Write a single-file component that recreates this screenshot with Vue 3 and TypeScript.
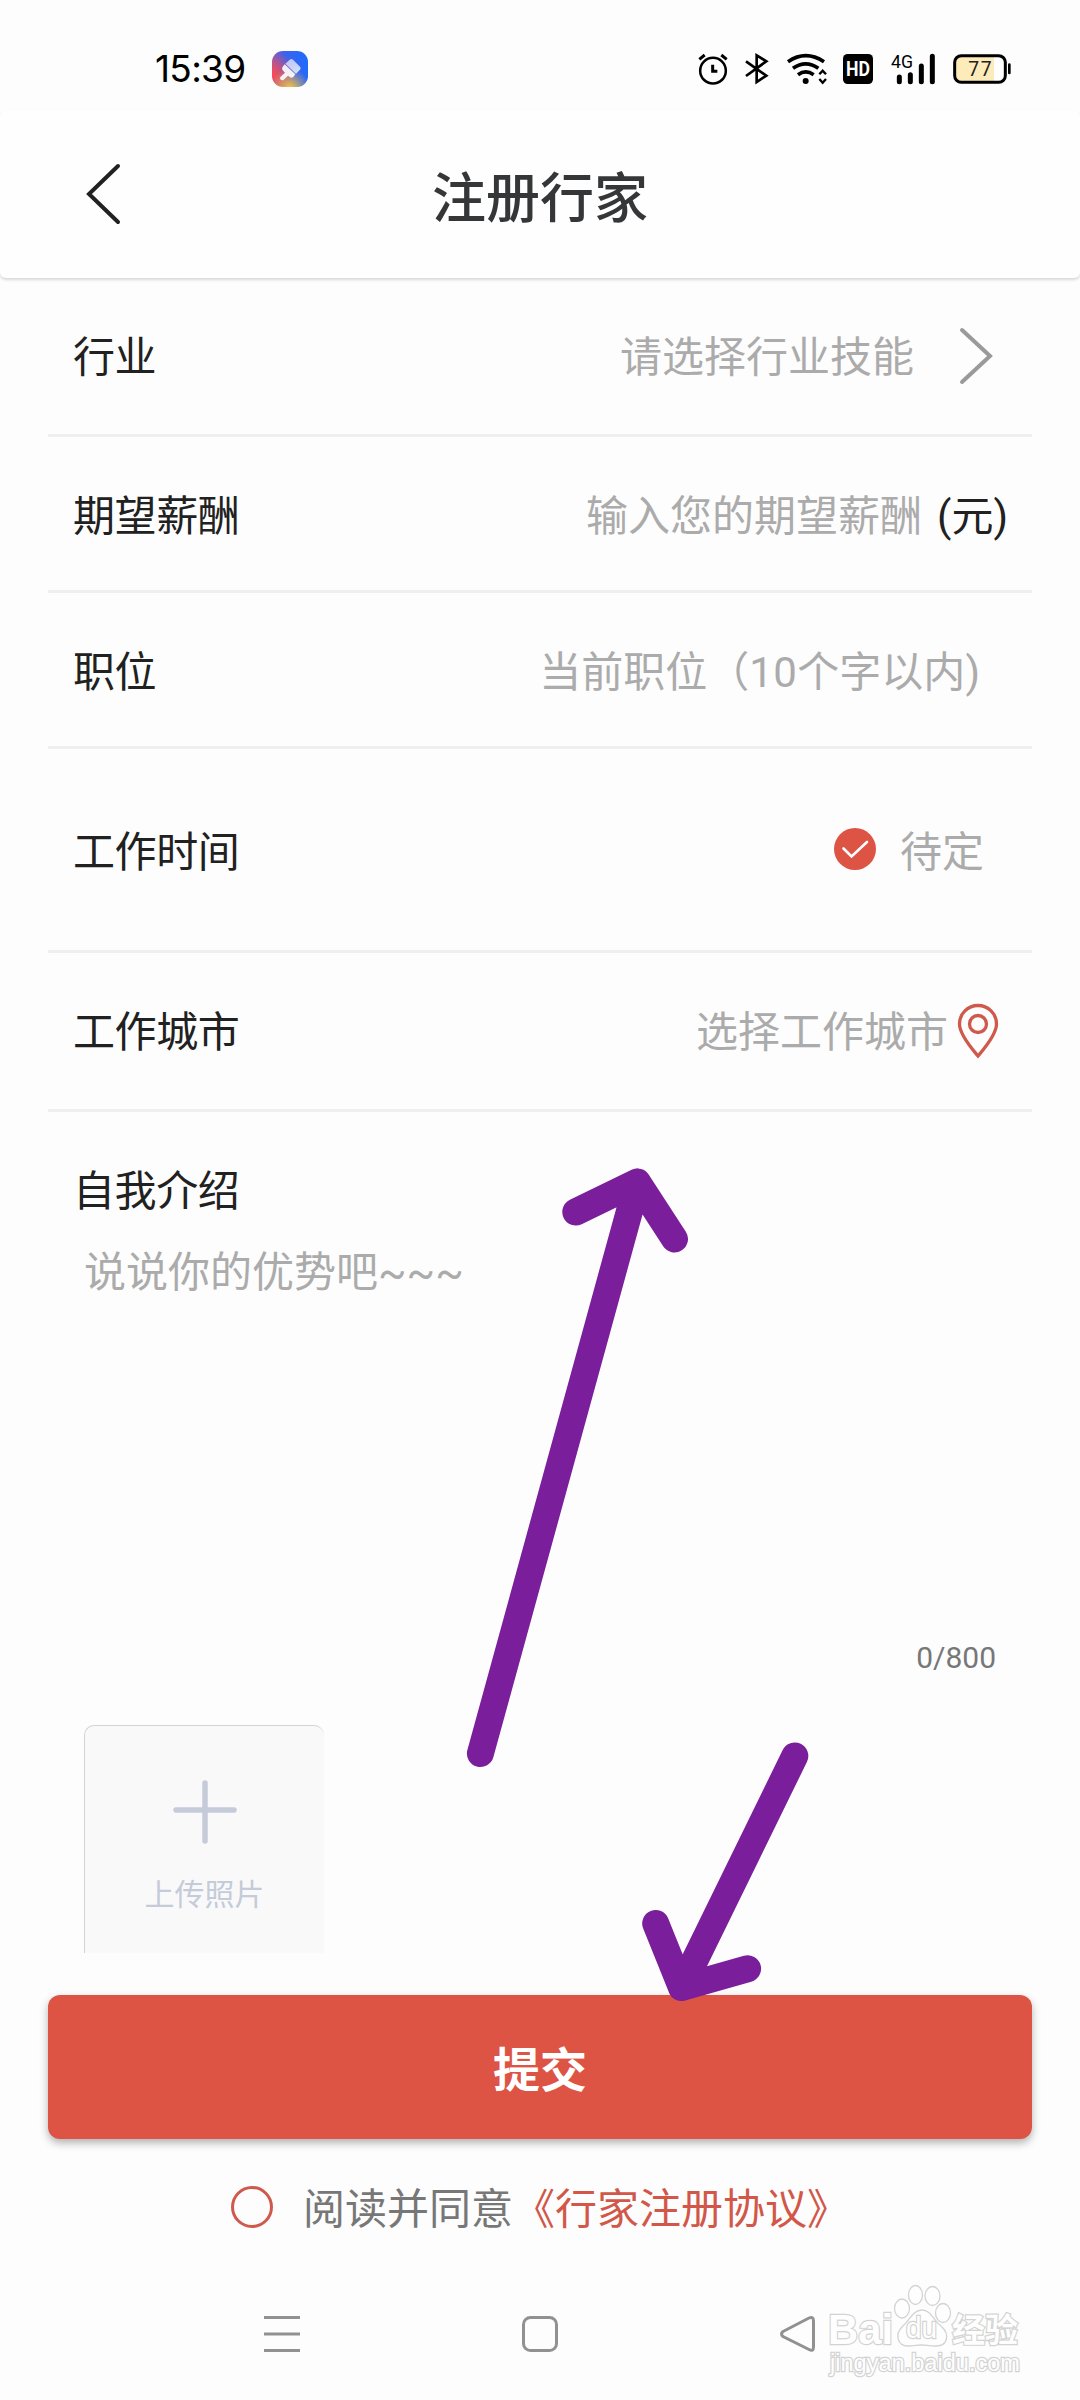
<script setup lang="ts">
interface Field {
  key: string
  label: string
  hint: string
}

const fields: Field[] = [
  { key: 'industry', label: '行业', hint: '请选择行业技能' },
  { key: 'salary', label: '期望薪酬', hint: '输入您的期望薪酬' },
  { key: 'position', label: '职位', hint: '' },
  { key: 'time', label: '工作时间', hint: '待定' },
  { key: 'city', label: '工作城市', hint: '选择工作城市' },
]
</script>

<template>
  <div class="screen">
    <div class="status">
      <span class="clock">15:39</span>
      <div class="app-badge">
        <svg viewBox="456 63 108 108" width="36" height="36">
          <defs>
            <linearGradient id="brush" x1="0" y1="0" x2="0.7" y2="1">
              <stop offset="0" stop-color="#fff" stop-opacity=".62" />
              <stop offset="1" stop-color="#fff" stop-opacity=".78" />
            </linearGradient>
          </defs>
          <path d="M509 89 Q514 85 519 89 L540 110 Q544 115 540 119 L528 131 L496 101 Z" fill="url(#brush)" />
          <path d="M494 103 L526 133 L520 141 Q514 145 509 141 L504 137 L491 149 Q486 153 481 148 Q478 144 482 140 L495 128 L488 121 Q484 116 488 110 Z" fill="#fff" fill-opacity=".9" />
        </svg>
      </div>
      <div class="indicators">
        <svg viewBox="54 66 90 102" width="30" height="34" fill="none" stroke="#000">
          <circle cx="99" cy="122" r="38.500" stroke-width="7.500" />
          <path d="M58 88 L74 75 M124 75 L140 88" stroke-width="9" />
          <path d="M98 104 V124 H112" stroke-width="9" />
        </svg>
        <svg class="bt" viewBox="192 66 78 102" width="26" height="34" fill="none" stroke="#000" stroke-width="8">
          <path d="M198 94 L259 137 L230 156 V76 L259 94 L198 138" />
        </svg>
        <svg class="wifi" viewBox="318 66 126 102" width="42" height="34" fill="none" stroke="#000">
          <path d="M324 95 Q377 59 432 95" stroke-width="11" />
          <path d="M339 115 Q377 88 415 115" stroke-width="11" />
          <path d="M354 134 Q377 117 401 134" stroke-width="11" />
          <circle cx="377" cy="153" r="9" fill="#000" stroke="none" />
          <path d="M418 133 L428 122 L438 133 M418 147 L428 158 L438 147" stroke-width="7" />
        </svg>
        <svg class="hd" viewBox="489 66 90 102" width="30" height="34">
          <rect x="489" y="72" width="90" height="90" rx="14" />
          <text x="534" y="139" class="hd-text" textLength="72" lengthAdjust="spacingAndGlyphs">HD</text>
        </svg>
        <svg class="signal" viewBox="630 66 141 102" width="47" height="34">
          <text x="633" y="115" class="g-text" textLength="66" lengthAdjust="spacingAndGlyphs">4G</text>
          <path d="M658 141 V155 M691 134 V155 M724 108 V155 M757 79 V155" stroke="#000" stroke-width="15" stroke-linecap="round" />
        </svg>
        <svg class="battery" viewBox="816 66 180 102" width="60" height="34">
          <rect x="824" y="77" width="152" height="80" rx="20" fill="#fff" />
          <path d="M844 77 H942 V157 H844 Q824 157 824 137 V97 Q824 77 844 77" fill="#fdebb9" />
          <rect x="824" y="77" width="152" height="80" rx="20" fill="none" stroke="#000" stroke-width="9" />
          <path d="M988 104 V129" stroke="#000" stroke-width="8" stroke-linecap="round" />
          <text x="900" y="138" class="bat-text" textLength="70">77</text>
        </svg>
      </div>
    </div>

    <header class="header">
      <svg class="back" viewBox="0 0 40 64" width="40" height="64">
        <path d="M34 4 L5 32 L34 60" />
      </svg>
      <h1>注册行家</h1>
    </header>

    <main>
      <div v-for="f in fields" :key="f.key" class="row" :class="f.key">
        <span class="label">{{ f.label }}</span>
        <svg v-if="f.key === 'time'" class="tick" viewBox="0 0 42 42" width="42" height="42">
          <circle cx="21" cy="21" r="21" fill="#dd5344" />
          <path d="M9.500 20.500 L17.500 28.500 L33 14" fill="none" stroke="#fff" stroke-width="2.600" stroke-linecap="round" />
        </svg>
        <span v-if="f.key === 'position'" class="hint">当前职位（<span class="num">10</span>个字以内<span class="paren">)</span></span>
        <span v-else class="hint">{{ f.hint }}</span>
        <svg v-if="f.key === 'industry'" class="next" viewBox="0 0 34 58" width="34" height="58">
          <path d="M3 3 L31 29 L3 55" />
        </svg>
        <span v-if="f.key === 'salary'" class="unit">(元)</span>
        <svg v-if="f.key === 'city'" class="pin" viewBox="0 0 42 56" width="42" height="56">
          <path d="M21 53 C16 47 2.500 32 2.500 21 A18.500 18.500 0 0 1 39.500 21 C39.500 32 26 47 21 53 Z" />
          <circle cx="21" cy="21" r="8.500" />
        </svg>
      </div>

      <section class="intro">
        <div class="label">自我介绍</div>
        <div class="hint">说说你的优势吧~~~</div>
        <div class="count">0/800</div>
      </section>

      <div class="upload">
        <svg viewBox="0 0 66 66" width="66" height="66">
          <path d="M33 4 V62 M4 31 H62" />
        </svg>
        <span>上传照片</span>
      </div>

      <button class="submit">提交</button>

      <div class="agree">
        <i class="radio"></i>
        <span>阅读并同意</span><span class="link">《行家注册协议》</span>
      </div>
    </main>

    <nav class="nav">
      <svg viewBox="0 0 36 40" width="36" height="40"><path d="M0 3.500 H36 M0 20 H36 M0 36.500 H36" /></svg>
      <svg viewBox="0 0 36 40" width="36" height="40"><rect x="1.500" y="3.500" width="33" height="33" rx="7" /></svg>
      <svg viewBox="0 0 36 40" width="36" height="40"><path d="M3 17.500 L29 4 Q33.500 2 33.500 7 V33 Q33.500 38 29 35.500 L3 22.500 Q0 20 3 17.500 Z" /></svg>
    </nav>

    <svg class="watermark" viewBox="822 2278 206 104" width="206" height="104">
      <g class="wm">
        <text x="828" y="2344" class="wm-bai" textLength="65" lengthAdjust="spacingAndGlyphs">Bai</text>
        <ellipse cx="902" cy="2308.500" rx="7.500" ry="9.500" />
        <ellipse cx="915.500" cy="2295" rx="7" ry="9.500" />
        <ellipse cx="932.500" cy="2296" rx="7.500" ry="9.500" />
        <ellipse cx="943" cy="2313" rx="7.500" ry="9.500" />
        <path d="M922 2310 C931 2310 933 2320 941 2326 C950 2334 948 2346 936 2346 C929 2346 926 2345 922 2345 C917 2345 914 2346 908 2346 C897 2346 895 2334 902 2327 C910 2320 913 2310 922 2310 Z" />
        <text x="906" y="2338" class="wm-du" textLength="31" lengthAdjust="spacingAndGlyphs">du</text>
        <text x="952" y="2342" class="wm-cn">经验</text>
        <text x="830" y="2371" class="wm-url" textLength="190" lengthAdjust="spacingAndGlyphs">jingyan.baidu.com</text>
      </g>
    </svg>

    <svg class="arrows" viewBox="0 0 1080 2400" width="1080" height="2400">
      <path d="M480.400 1753.500 L637.500 1182 M575.800 1212 L637.500 1182 L674.500 1239" />
      <path d="M794.800 1756 L681.500 1987.500 M655.700 1923.500 L681.500 1987.500 L747.600 1968.700" />
    </svg>
  </div>
</template>

<style>
body {
  margin: 0;
  background: #fdfdfd;
}
</style>

<style scoped>
.screen {
  position: relative;
  box-sizing: border-box;
  width: 1080px;
  height: 2400px;
  overflow: hidden;
  background: #fdfdfd;
  color: #212121;
  font-family: Roboto, "Noto Sans CJK SC", sans-serif;
  font-size: 42px;
}
svg {
  display: block;
  flex: none;
}
.status {
  display: flex;
  align-items: center;
  box-sizing: border-box;
  height: 110px;
  padding: 28px 68px 0 155px;
}
.clock {
  width: 117px;
  color: #000;
  font-family: Inter, sans-serif;
  font-size: 37px;
  line-height: 44px;
  letter-spacing: -0.7px;
}
.app-badge {
  width: 36px;
  height: 36px;
  border-radius: 11px;
  background:
    radial-gradient(circle at 50% 105%, #fdc83a 0, rgba(253, 200, 58, 0) 48%),
    radial-gradient(circle at 0 65%, #ff4a4f 0, rgba(255, 74, 79, 0) 55%),
    linear-gradient(75deg, #a05aa8 0%, #3d62ee 48%, #1a6dfc 100%);
}
.indicators {
  display: flex;
  align-items: center;
  margin-left: auto;
}
.bt { margin-left: 16px; }
.wifi { margin-left: 16px; }
.hd { margin-left: 15px; }
.signal { margin-left: 17px; }
.battery { margin-left: 15px; }
.hd-text {
  fill: #fff;
  font: 700 62px Roboto, sans-serif;
  text-anchor: middle;
}
.g-text { font: 400 54px Roboto, sans-serif; }
.bat-text {
  font: 400 58px Roboto, sans-serif;
  fill: #222;
  text-anchor: middle;
}
.header {
  display: grid;
  grid-template-columns: 160px 1fr 160px;
  align-items: center;
  height: 168px;
  border-radius: 6px;
  background: #fefefe;
  box-shadow: 0 2px 3px rgba(0, 0, 0, 0.15);
}
.back {
  margin-left: 84px;
}
.back path {
  fill: none;
  stroke: #212121;
  stroke-width: 4;
  stroke-linecap: round;
}
h1 {
  margin: 11px 0 0;
  color: #353637;
  font-size: 54px;
  font-weight: 500;
  line-height: 70px;
  text-align: center;
}
.row {
  display: flex;
  align-items: center;
  box-sizing: border-box;
  height: 156px;
  margin: 0 48px;
  padding: 0 25px 0 25px;
  border-bottom: 3px solid #efefef;
  line-height: 60px;
}
.row > span { padding-top: 4px; }
.label {
  color: #212121;
  letter-spacing: -0.4px;
}
.row .label { margin-right: auto; }
.hint { color: #ababab; }
.industry { height: 159px; padding-right: 39px; }
.salary { padding: 3px 24px 0 25px; }
.position { padding: 3px 52px 0 25px; }
.time { height: 204px; padding-top: 3px; padding-right: 48px; }
.city { height: 159px; padding-right: 33px; }
.next { margin-left: 45px; }
.next path {
  fill: none;
  stroke: #9a9a9a;
  stroke-width: 4;
  stroke-linecap: round;
}
.unit { margin-left: 15px; }
.num { letter-spacing: 0.5px; }
.tick { margin-right: 24px; margin-top: -5px; }
.pin { margin-left: 9px; }
.pin path, .pin circle {
  fill: none;
  stroke: #cf5a4c;
  stroke-width: 3.3;
}
.intro {
  height: 613px;
  padding: 50px 73px 0;
  box-sizing: border-box;
  line-height: 60px;
}
.intro .hint { margin: 21px 0 0 11px; }
.count {
  margin: 335px 11px 0 0;
  color: #777;
  font-size: 30px;
  line-height: 40px;
  text-align: right;
}
.upload {
  display: flex;
  flex-direction: column;
  align-items: center;
  box-sizing: border-box;
  width: 240px;
  height: 228px;
  margin-left: 84px;
  padding-top: 53px;
  border: 1px solid #d3d3d3;
  border-width: 1px 0 0 1px;
  border-radius: 10px 10px 0 0;
  background: #f9f9f9;
  color: #c5cbd9;
  font-size: 30px;
  line-height: 40px;
}
.upload path {
  stroke: #c5cbd9;
  stroke-width: 5.5;
  stroke-linecap: round;
}
.upload span { margin-top: 30px; }
.submit {
  display: block;
  width: 984px;
  height: 144px;
  margin: 42px 48px 0;
  padding: 0 0 2px;
  border: 0;
  border-radius: 12px;
  background: #dd5344;
  box-shadow: 0 4px 8px rgba(0, 0, 0, 0.3);
  color: #fff;
  font: 700 47px Roboto, "Noto Sans CJK SC", sans-serif;
}
.agree {
  display: flex;
  align-items: center;
  margin: 41px 0 0 231px;
  color: #777;
  line-height: 60px;
}
.radio {
  box-sizing: border-box;
  width: 42px;
  height: 42px;
  margin: -7px 30px 0 0;
  border: 3px solid #cf5a4c;
  border-radius: 50%;
}
.link { color: #d25748; }
.nav {
  display: flex;
  gap: 222px;
  margin: 74px 0 0 264px;
}
.nav svg {
  fill: none;
  stroke: #919191;
  stroke-width: 3;
}
.watermark {
  position: absolute;
  left: 822px;
  top: 2278px;
}
.wm {
  fill: #fefefe;
  stroke: #d3d3d3;
  stroke-width: 1.3;
}
.wm text { paint-order: stroke; stroke-width: 2.4; }
.wm-bai { font: 700 43px "Liberation Sans", sans-serif; }
.wm-du { font: 400 29px "Liberation Sans", sans-serif; }
.wm-cn { font: 700 33px "Noto Sans CJK SC", sans-serif; }
.wm-url { font: 400 23px "Liberation Sans", sans-serif; }
.arrows {
  position: absolute;
  left: 0;
  top: 0;
  pointer-events: none;
  fill: none;
  stroke: #7a1e9b;
  stroke-width: 27;
  stroke-linecap: round;
  stroke-linejoin: round;
}
</style>
